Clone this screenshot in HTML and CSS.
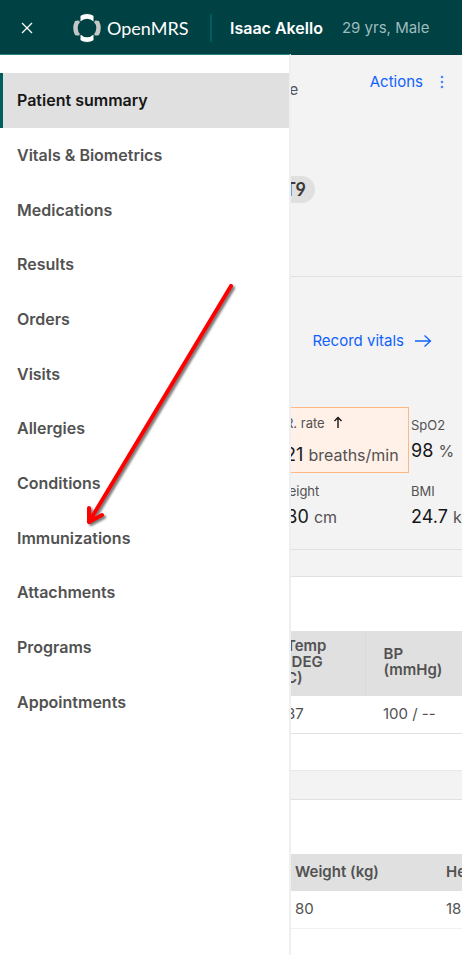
FILE: index.html
```html
<!DOCTYPE html>
<html lang="en">
<head>
<meta charset="utf-8">
<meta name="viewport" content="width=device-width, initial-scale=1">
<title>OpenMRS</title>
<link rel="stylesheet" href="styles.css">
</head>
<body>
<header class="topbar">
  <button class="close" type="button" aria-label="Close menu">
    <svg width="14" height="14" viewBox="0 0 14 14"><path d="M2 2 12 12M12 2 2 12"/></svg>
  </button>
  <a class="brand" href="#">
    <svg width="30" height="30" viewBox="0 0 30 30" aria-hidden="true">
      <path fill="#c6c6c6" d="M3 8Q6 7 9 8V22Q6 23 3 22Q-0.500 15 3 8ZM27 8Q24 7 21 8V22Q24 23 27 22Q30.500 15 27 8Z"/>
      <path fill="#fff" stroke="#004144" d="M8 2.500Q15-1.500 22 2.500V9H8ZM8 27.500Q15 31.500 22 27.500V21H8Z"/>
      <circle cx="15" cy="15" r="9.300" fill="#004144"/>
    </svg>
    <span>OpenMRS</span>
  </a>
  <div class="patient"><strong>Isaac Akello</strong><span>29 yrs, Male</span></div>
</header>
<div class="workspace">
  <nav class="drawer" aria-label="Patient chart">
    <div class="links">
      <a class="current" href="#" aria-current="page">Patient summary</a>
      <a href="#">Vitals &amp; Biometrics</a>
      <a href="#">Medications</a>
      <a href="#">Results</a>
      <a href="#">Orders</a>
      <a href="#">Visits</a>
      <a href="#">Allergies</a>
      <a href="#">Conditions</a>
      <a href="#">Immunizations</a>
      <a href="#">Attachments</a>
      <a href="#">Programs</a>
      <a href="#">Appointments</a>
    </div>
  </nav>
  <svg class="pointer" width="160" height="256" viewBox="0 0 160 256" aria-hidden="true">
    <path d="M151 6 9 242M9 228V242L22 235"/>
  </svg>
  <main>
    <section class="banner">
      <div class="banner-row">
        <span class="gender">Male</span>
        <button class="actions" type="button">Actions
          <svg width="4" height="14" viewBox="0 0 4 14" aria-hidden="true"><circle cx="2" cy="2" r="1.300"/><circle cx="2" cy="7" r="1.300"/><circle cx="2" cy="12" r="1.300"/></svg>
        </button>
      </div>
      <span class="tag">T9</span>
    </section>
    <section class="vitals">
      <a class="record" href="#">Record vitals
        <svg width="18" height="14" viewBox="0 0 18 14" aria-hidden="true"><path d="M1 7H16M10.500 1.500 16.500 7 10.500 12.500"/></svg>
      </a>
      <div class="readings">
        <div class="reading alert">
          <span class="label">R. rate <svg width="10" height="12" viewBox="0 0 10 12" aria-hidden="true"><path d="M5 12V1.500M1.500 5 5 1.500 8.500 5"/></svg></span>
          <span class="value">21 <small>breaths/min</small></span>
        </div>
        <div class="reading"><span class="label">SpO2</span><span class="value">98 <small>%</small></span></div>
        <div class="reading"><span class="label">Height</span><span class="value">180 <small>cm</small></span></div>
        <div class="reading"><span class="label">BMI</span><span class="value">24.7 <small>kg</small></span></div>
      </div>
    </section>
    <section class="card">
      <table class="vitals-table">
        <thead><tr><th></th><th>Temp<br>(DEG<br>C)</th><th>BP<br>(mmHg)</th></tr></thead>
        <tbody><tr><td></td><td>37</td><td>100 / --</td></tr></tbody>
      </table>
    </section>
    <section class="card">
      <table class="biometrics-table">
        <thead><tr><th></th><th>Weight (kg)</th><th>Height</th></tr></thead>
        <tbody><tr><td></td><td>80</td><td>180</td></tr></tbody>
      </table>
    </section>
  </main>
</div>
</body>
</html>
```

FILE: styles.css
```css
* { box-sizing: border-box; }

body {
  margin: 0;
  min-height: 100vh;
  display: flex;
  flex-direction: column;
  background: #f3f3f3;
  color: #525252;
  font: 15px/20px Inter, "Liberation Sans", sans-serif;
}

a { color: inherit; text-decoration: none; }
button { border: 0; padding: 0; background: none; font: inherit; color: inherit; }
svg { display: block; fill: none; flex: none; }

.topbar {
  height: 55px;
  display: flex;
  align-items: center;
  background: #004144;
  color: #fff;
  white-space: nowrap;
}
.close { width: 53px; height: 54px; display: grid; place-items: center; }
.close svg { stroke: #fff; stroke-width: 1.300; }
.brand {
  display: flex;
  align-items: center;
  gap: 5px;
  width: 159px;
  height: 28px;
  padding-left: 19px;
  border-right: 2px solid #005d5d;
  font: 18px/24px Lato, sans-serif;
}
.patient { display: flex; gap: 19px; padding-left: 18px; }
.patient strong { font-size: 16px; font-weight: 600; }
.patient span { color: #9dbcbd; }

.workspace { position: relative; flex: 1; display: flex; }

.drawer {
  position: absolute;
  z-index: 1;
  top: -1px;
  bottom: 0;
  left: 0;
  width: 291px;
  padding-top: 18px;
  border-top: 1px solid #2b8080;
  border-right: 2px solid #efefef;
  background: #fff;
}
.links { display: grid; grid-auto-rows: 1fr; height: 656px; }
.links a {
  display: flex;
  align-items: center;
  padding-left: 14px;
  border-left: 3px solid transparent;
  font-size: 16px;
  font-weight: 600;
}
.links .current { background: #e0e0e0; border-color: #005d5d; color: #161616; }

.pointer {
  position: absolute;
  z-index: 2;
  left: 80px;
  top: 225px;
  stroke: #f00;
  stroke-width: 4;
  stroke-linecap: round;
  stroke-linejoin: round;
  filter: drop-shadow(2px 2px 1px #0008);
}

main { flex: 1; min-width: 0; display: flex; flex-direction: column; overflow: hidden; }

.banner { height: 222px; border-bottom: 1px solid #e0e0e0; }
.banner-row { display: flex; justify-content: space-between; padding: 17px 18px 0 264px; }
.gender { padding-top: 8px; }
.actions { display: flex; align-items: center; gap: 17px; height: 20px; color: #0f62fe; }
.actions svg { fill: #4589ff; }
.tag {
  display: block;
  width: 60px;
  margin: 76px 0 0 255px;
  padding: 0 9px;
  border-radius: 14px;
  background: #e0e0e0;
  color: #393939;
  font: bold 18px/27px Lato, sans-serif;
  text-align: right;
}

.vitals { height: 273px; padding-top: 54px; border-bottom: 1px solid #e0e0e0; }
.record {
  display: flex;
  align-items: center;
  justify-content: flex-end;
  gap: 10px;
  padding-right: 30px;
  color: #0f62fe;
}
.record svg { stroke: #0f62fe; stroke-width: 1.300; }
.readings {
  display: grid;
  grid-template-columns: 132px 53px;
  grid-template-rows: 66px 64px;
  justify-content: end;
  margin-top: 56px;
}
.reading { padding: 8px 0 0 2px; white-space: nowrap; }
.reading .label { display: flex; gap: 8px; font-size: 13px; }
.reading .value { display: block; margin-top: 6px; color: #161616; font-size: 18px; }
.reading small { color: #525252; font-size: 16px; }
.reading.alert { padding: 5px 7px; border: 1px solid #ffb784; background: #fff0e8; }
.alert .label svg { margin-top: 3px; stroke: #161616; stroke-width: 1.400; }
.alert .value { margin-top: 12px; }

.card {
  margin-top: 26px;
  padding: 54px 0 36px;
  border-top: 1px solid #e0e0e0;
  border-bottom: 1px solid #e8e8e8;
  background: #fff;
}
.card:last-child { flex: 1; margin-top: 28px; padding-bottom: 0; border-bottom: 0; }
table { width: 100%; border-collapse: collapse; table-layout: fixed; }
th, td { padding: 0 0 0 18px; text-align: left; white-space: nowrap; }
th { height: 65px; background: #e0e0e0; font-weight: 600; line-height: 16px; }
td { height: 37px; border-bottom: 1px solid #e0e0e0; }
.vitals-table th { padding-bottom: 4px; }
.vitals-table th:nth-child(1) { width: 268px; }
.vitals-table th:nth-child(3) { width: 97px; border-left: 1px solid #dadada; }
.biometrics-table th { height: 37px; }
.biometrics-table td { height: 38px; border-color: #f0f0f0; }
.biometrics-table th:nth-child(1) { width: 277px; }
.biometrics-table th:nth-child(3) { width: 34px; }
```
